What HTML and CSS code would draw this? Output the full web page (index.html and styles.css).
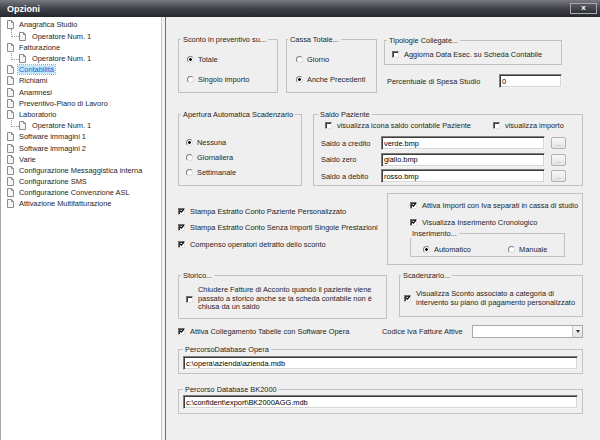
FILE: index.html
```html
<!DOCTYPE html>
<html>
<head>
<meta charset="utf-8">
<link rel="stylesheet" href="styles.css">
</head>
<body>
<svg width="0" height="0" class="defs">
  <symbol id="doc" viewBox="0 0 7 9">
    <path d="M0.5 0.5H4.5L6.5 2.5V8.5H0.5Z" fill="#f6f6f6" stroke="#8c8c8c"/>
    <path d="M4.5 0.5V2.5H6.5" fill="none" stroke="#8c8c8c"/>
  </symbol>
  <symbol id="tick" viewBox="0 0 7 7">
    <path d="M1.2 3.2L2.8 4.9L5.8 1.4" fill="none" stroke="#000" stroke-width="1.4"/>
  </symbol>
</svg>
<div class="win">
  <div class="title"><span>Opzioni</span><div class="close">x</div></div>
  <div class="main">
    <div class="tree">
      <div class="ti"><svg class="ico"><use href="#doc"/></svg><span>Anagrafica Studio</span></div>
      <div class="ti child"><svg class="ico"><use href="#doc"/></svg><span>Operatore Num. 1</span></div>
      <div class="ti"><svg class="ico"><use href="#doc"/></svg><span>Fatturazione</span></div>
      <div class="ti child"><svg class="ico"><use href="#doc"/></svg><span>Operatore Num. 1</span></div>
      <div class="ti sel"><svg class="ico"><use href="#doc"/></svg><span>Contabilità</span></div>
      <div class="ti"><svg class="ico"><use href="#doc"/></svg><span>Richiami</span></div>
      <div class="ti"><svg class="ico"><use href="#doc"/></svg><span>Anamnesi</span></div>
      <div class="ti"><svg class="ico"><use href="#doc"/></svg><span>Preventivo-Piano di Lavoro</span></div>
      <div class="ti"><svg class="ico"><use href="#doc"/></svg><span>Laboratorio</span></div>
      <div class="ti child"><svg class="ico"><use href="#doc"/></svg><span>Operatore Num. 1</span></div>
      <div class="ti"><svg class="ico"><use href="#doc"/></svg><span>Software immagini 1</span></div>
      <div class="ti"><svg class="ico"><use href="#doc"/></svg><span>Software immagini 2</span></div>
      <div class="ti"><svg class="ico"><use href="#doc"/></svg><span>Varie</span></div>
      <div class="ti"><svg class="ico"><use href="#doc"/></svg><span>Configurazione Messaggistica interna</span></div>
      <div class="ti"><svg class="ico"><use href="#doc"/></svg><span>Configurazione SMS</span></div>
      <div class="ti"><svg class="ico"><use href="#doc"/></svg><span>Configurazione Convenzione ASL</span></div>
      <div class="ti"><svg class="ico"><use href="#doc"/></svg><span>Attivazione Multifatturazione</span></div>
    </div>
    <div class="split"></div>
    <div class="panel">
      <div class="row r1">
        <div class="grp g-sconto">
          <span class="lg">Sconto in preventivo su...</span>
          <div class="opt"><i class="rad on"></i>Totale</div>
          <div class="opt"><i class="rad"></i>Singolo importo</div>
        </div>
        <div class="grp g-cassa">
          <span class="lg lg-s">Cassa Totale...</span>
          <div class="opt"><i class="rad"></i>Giorno</div>
          <div class="opt"><i class="rad on"></i>Anche Precedenti</div>
        </div>
        <div class="col-tip">
          <div class="grp g-tip">
            <span class="lg">Tipologie Collegate...</span>
            <div class="opt"><i class="chk"></i>Aggiorna Data Esec. su Scheda Contabile</div>
          </div>
          <div class="perc"><span>Percentuale di Spesa Studio</span><div class="inp w-perc">0</div></div>
        </div>
      </div>

      <div class="row r2">
        <div class="grp g-ap">
          <span class="lg">Apertura Automatica Scadenzario</span>
          <div class="opt"><i class="rad on"></i>Nessuna</div>
          <div class="opt"><i class="rad"></i>Giornaliera</div>
          <div class="opt"><i class="rad"></i>Settimanale</div>
        </div>
        <div class="grp g-saldo">
          <span class="lg lg-w">Saldo Paziente</span>
          <div class="sal-top">
            <div class="opt o-ico"><i class="chk"></i>visualizza icona saldo contabile Paziente</div>
            <div class="opt"><i class="chk"></i>visualizza importo</div>
          </div>
          <div class="sal-row"><span class="sal-lbl">Saldo a credito</span><div class="inp w-bmp">verde.bmp</div><div class="btn">...</div></div>
          <div class="sal-row"><span class="sal-lbl">Saldo zero</span><div class="inp w-bmp">giallo.bmp</div><div class="btn">...</div></div>
          <div class="sal-row"><span class="sal-lbl">Saldo a debito</span><div class="inp w-bmp">rosso.bmp</div><div class="btn">...</div></div>
        </div>
      </div>

      <div class="row r3">
        <div class="cbcol">
          <div class="opt"><i class="chk"><svg><use href="#tick"/></svg></i>Stampa Estratto Conto Paziente Personalizzato</div>
          <div class="opt"><i class="chk"><svg><use href="#tick"/></svg></i>Stampa Estratto Conto Senza Importi Singole Prestazioni</div>
          <div class="opt"><i class="chk"><svg><use href="#tick"/></svg></i>Compenso operatori detratto dello sconto</div>
        </div>
        <div class="grp g-att">
          <div class="opt"><i class="chk"><svg><use href="#tick"/></svg></i>Attiva Importi con Iva separati in cassa di studio</div>
          <div class="opt"><i class="chk"><svg><use href="#tick"/></svg></i>Visualizza Inserimento Cronologico</div>
          <div class="grp g-ins">
            <span class="lg lg-n">Inserimento...</span>
            <div class="opt o-auto"><i class="rad on"></i>Automatico</div>
            <div class="opt"><i class="rad"></i>Manuale</div>
          </div>
        </div>
      </div>

      <div class="row r4">
        <div class="grp g-sto">
          <span class="lg">Storico...</span>
          <div class="opt multi"><i class="chk"></i><span>Chiudere Fatture di Acconto quando il paziente viene<br>passato a storico anche se la scheda contabile non è<br>chiusa da un saldo</span></div>
        </div>
        <div class="grp g-scad">
          <span class="lg lg-s">Scadenzario...</span>
          <div class="opt multi"><i class="chk"><svg><use href="#tick"/></svg></i><span>Visualizza Sconto associato a categoria di<br>intervento su piano di pagamento personalizzato</span></div>
        </div>
      </div>

      <div class="row r5">
        <div class="opt o-coll"><i class="chk"><svg><use href="#tick"/></svg></i>Attiva Collegamento Tabelle con Software Opera</div>
        <span class="iva-lbl">Codice Iva Fatture Attive</span>
        <div class="combo"><div class="combo-btn"><i class="arr"></i></div></div>
      </div>

      <div class="grp g-path g-opera">
        <span class="lg lg-w">PercorsoDatabase Opera</span>
        <div class="inp">c:\opera\azienda\azienda.mdb</div>
      </div>
      <div class="grp g-path g-bk">
        <span class="lg lg-w">Percorso Database BK2000</span>
        <div class="inp">c:\confident\export\BK2000AGG.mdb</div>
      </div>
    </div>
  </div>
</div>
</body>
</html>
```

FILE: styles.css
```css
* { box-sizing: border-box; }
body {
  margin: 0;
  width: 600px;
  height: 440px;
  overflow: hidden;
  font-family: "Liberation Sans", Arial, sans-serif;
  font-size: 7.4px;
  color: #1e1e1e;
  background: #efefef;
}
.defs { position: absolute; }
.win { display: flex; flex-direction: column; height: 440px; }

.title {
  height: 17px;
  flex: none;
  background: linear-gradient(#7a7a82, #45454d 45%, #26262d);
  display: flex;
  align-items: center;
  justify-content: space-between;
  padding: 1px 3px 0 7px;
  color: #fff;
  font-size: 9px;
  font-weight: bold;
}
.close {
  width: 27px;
  height: 11px;
  margin-top: -2px;
  border: 1px solid #a9a9af;
  background: linear-gradient(#5a5a62, #303037);
  color: #fff;
  font-size: 8px;
  line-height: 8px;
  display: flex;
  align-items: center;
  justify-content: center;
}

.main { flex: 1; display: flex; min-height: 0; }

.tree {
  width: 162px;
  flex: none;
  background: #fff;
  border-left: 1px solid #a8a8a8;
  border-right: 1px solid #c8c8c8;
  padding-top: 2.4px;
}
.ti {
  display: flex;
  align-items: center;
  height: 11.2px;
  padding-left: 6px;
  white-space: nowrap;
}
.ti .ico { width: 7px; height: 9px; margin-right: 5px; flex: none; }
.ti.child { padding-left: 18px; position: relative; }
.ti.child .ico { margin-right: 6px; }
.ti.child::before {
  content: "";
  position: absolute;
  left: 10px;
  top: -2px;
  width: 7px;
  height: 7.6px;
  border-left: 1px dotted #9a9a9a;
  border-bottom: 1px dotted #9a9a9a;
}
.ti.sel span {
  background: #c3e7fa;
  color: #1f62cf;
  outline: 1px dotted #7fb2e0;
  padding: 0 1px;
  margin-left: -1px;
}

.split {
  width: 4px;
  flex: none;
  background: #f3f3f3;
  border-right: 1px solid #6e6e6e;
}

.panel {
  flex: 1;
  padding: 0 17px 0 12px;
  display: flex;
  flex-direction: column;
}
.row { display: flex; align-items: flex-start; }

.grp {
  position: relative;
  border: 1px solid #c2c2c2;
  display: flex;
  flex-direction: column;
}
.lg {
  position: absolute;
  top: -5px;
  left: 2px;
  padding: 0 2px;
  line-height: 9px;
  background: #efefef;
  white-space: nowrap;
}
.lg-s { left: 1px; }
.lg-w { left: 4px; }
.lg-n { left: -1px; }

.opt {
  display: flex;
  align-items: center;
  height: 10px;
  white-space: nowrap;
}
.rad {
  width: 7px;
  height: 7px;
  flex: none;
  border-radius: 50%;
  border: 1px solid;
  border-color: #7c7c7c #dcdcdc #dcdcdc #7c7c7c;
  background: #fff;
  margin-right: 4px;
}
.rad.on { background: radial-gradient(circle, #000 1.1px, #fff 1.6px); }
.chk {
  width: 7px;
  height: 7px;
  flex: none;
  border: 1px solid;
  border-color: #6e6e6e #e2e2e2 #e2e2e2 #6e6e6e;
  box-shadow: inset 1px 1px 0 #3a3a3a;
  background: #fff;
  margin-right: 5px;
  position: relative;
}
.chk svg { position: absolute; left: 0; top: -1px; width: 6px; height: 6px; }

.inp {
  height: 14px;
  background: #fff;
  border: 1px solid;
  border-color: #7f7f7f #f4f4f4 #f4f4f4 #7f7f7f;
  box-shadow: inset 1px 1px 0 #3c3c3c, inset -1px -1px 0 #d6d6d6;
  padding-left: 2px;
  display: flex;
  align-items: center;
  color: #000;
  white-space: nowrap;
}

/* row 1 */
.r1 { margin-top: 22px; }
.g-sconto { width: 100px; height: 54px; padding: 14px 0 0 8px; gap: 10px; }
.g-cassa { width: 91px; height: 54px; padding: 14px 0 0 9px; gap: 10px; margin-left: 8px; }
.col-tip { width: 178px; margin-left: 7px; margin-top: 1px; }
.g-tip { height: 25px; padding: 8px 0 0 7px; }
.perc {
  display: flex;
  justify-content: space-between;
  align-items: center;
  margin-top: 9px;
  padding-left: 3px;
}
.w-perc { width: 63px; }

/* row 2 */
.r2 { margin-top: 21px; }
.g-ap { width: 124px; height: 72px; padding: 22px 0 0 7px; gap: 5px; }
.g-saldo { width: 270px; height: 72px; margin-left: 11px; padding: 5px 0 0 7px; }
.sal-top { display: flex; margin-left: 4px; margin-bottom: 6px; }
.o-ico { width: 168px; }
.sal-row { display: flex; align-items: center; height: 14px; margin-bottom: 2.7px; }
.sal-lbl { width: 60px; }
.w-bmp { width: 164px; }
.btn {
  width: 15px;
  height: 12px;
  margin-left: 6px;
  border: 1px solid #b3b3b3;
  border-radius: 2px;
  background: linear-gradient(#f7f7f7, #e4e4e4);
  color: #777;
  font-size: 6px;
  display: flex;
  align-items: flex-end;
  justify-content: center;
  line-height: 8px;
}

/* row 3 */
.r3 { margin-top: 7px; }
.cbcol { width: 209px; padding-top: 13px; display: flex; flex-direction: column; gap: 6.5px; }
.g-att { width: 196px; height: 72px; padding: 6px 0 0 22px; gap: 7px; }
.g-ins {
  width: 155px;
  height: 24px;
  margin-top: -1px;
  flex-direction: row;
  padding: 10px 0 0 12px;
}
.o-auto { width: 85px; }

/* row 4 */
.r4 { margin-top: 10px; }
.g-sto { width: 209px; height: 44px; padding: 10px 0 0 7px; }
.g-scad { width: 184px; height: 42px; margin-left: 12px; padding: 14px 0 0 4px; }
.opt.multi { height: auto; line-height: 8.7px; }

/* row 5 */
.r5 { margin-top: 6px; align-items: center; height: 13px; }
.o-coll { width: 204px; }
.iva-lbl { width: 90px; white-space: nowrap; }
.combo {
  width: 111px;
  height: 13px;
  background: #fff;
  border: 1px solid #a9a9a9;
  display: flex;
  justify-content: flex-end;
}
.combo-btn {
  width: 10px;
  background: linear-gradient(#f6f6f6, #e2e2e2);
  border-left: 1px solid #c8c8c8;
  display: flex;
  align-items: center;
  justify-content: center;
}
.arr {
  width: 0;
  height: 0;
  border-left: 2.5px solid transparent;
  border-right: 2.5px solid transparent;
  border-top: 3px solid #333;
}

/* path groups */
.g-path { height: 25px; padding: 6px 4px 0 4px; }
.g-opera { margin-top: 11px; }
.g-bk { margin-top: 15px; padding-top: 5px; }
.g-path .inp { height: 14px; }
```
